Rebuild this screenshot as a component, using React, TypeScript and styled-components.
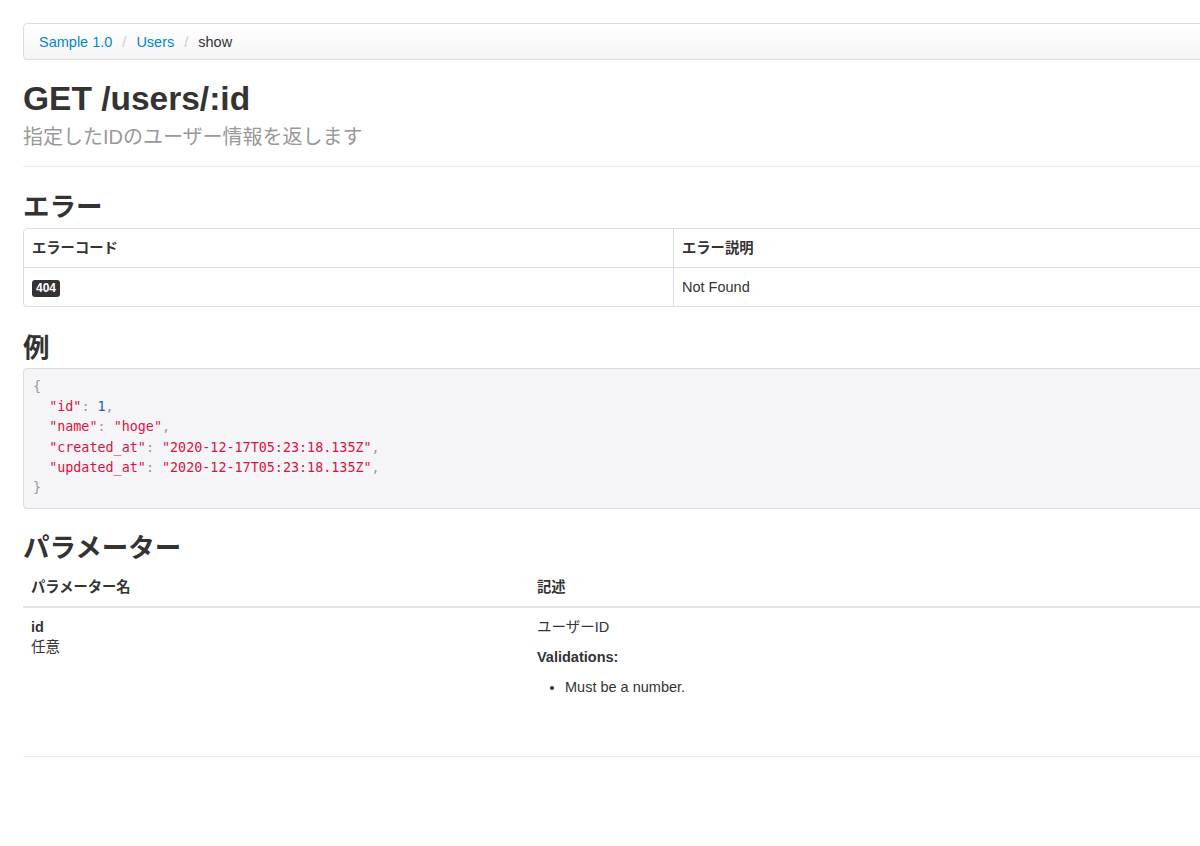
import styled, {createGlobalStyle} from "styled-components";

const GlobalStyle = createGlobalStyle`
    html, body {
        margin: 0;
        padding: 0;
        overflow-x: hidden;
        background: #ffffff;
    }
    body {
        font-family: "Liberation Sans", Arial, "Noto Sans CJK JP", sans-serif;
        font-size: 14.5px;
        line-height: 20px;
        color: #333333;
    }
`;

const Page = styled.div`
    width: 1300px;
    padding: 23px 0 80px 23px;
`;

const Breadcrumb = styled.ul`
    display: flex;
    align-items: center;
    list-style: none;
    margin: 0 0 19px 0;
    padding: 8px 15px;
    height: 19px;
    background: linear-gradient(to bottom, #ffffff, #f5f5f5);
    border: 1px solid #dddddd;
    border-radius: 4px;
    box-shadow: inset 0 1px 0 #ffffff;
    font-size: 14.5px;
`;

const Crumb = styled.li<{ $active?: boolean }>`
    color: ${p => (p.$active ? "#333333" : "#0088cc")};
`;

const Divider = styled.span`
    color: #cccccc;
    padding: 0 10px;
`;

const Title = styled.h1`
    margin: 0;
    font-size: 33.5px;
    line-height: 40px;
    font-weight: bold;
    color: #333333;
`;

const Subtitle = styled.div`
    font-size: 20px;
    line-height: 26px;
    color: #999999;
    margin-top: 5px;
`;

const Rule = styled.hr<{ $top: number }>`
    border: 0;
    border-top: 1px solid #eeeeee;
    margin: ${p => p.$top}px 0 0 0;
`;

const Section = styled.section<{ $gap: number }>`
    margin-top: ${p => p.$gap}px;
`;

const SectionTitle = styled.h2`
    margin: 0;
    font-size: 26.5px;
    line-height: 30px;
    font-weight: bold;
    color: #333333;
`;

const BorderedTable = styled.table`
    width: 100%;
    border-collapse: separate;
    border-spacing: 0;
    border: 1px solid #dddddd;
    border-radius: 4px;
    margin: 6px 0 0 0;
    th, td {
        text-align: left;
        padding: 9px 8px;
        line-height: 20px;
        vertical-align: top;
    }
    th {
        font-size: 14.3px;
        font-weight: bold;
    }
    th + th, td + td {
        border-left: 1px solid #dddddd;
    }
    td {
        border-top: 1px solid #dddddd;
    }
`;

const Badge = styled.span`
    display: inline-block;
    padding: 0 4px;
    background: #333333;
    color: #ffffff;
    font-size: 12px;
    font-weight: bold;
    line-height: 17px;
    border-radius: 3px;
    vertical-align: middle;
`;

const Code = styled.pre`
    margin: 5px 0 0 0;
    padding: 8px 9px 10px 9px;
    background: #f5f5f7;
    border: 1px solid #dcdcdc;
    border-radius: 4px;
    font-family: "DejaVu Sans Mono", "Liberation Mono", monospace;
    font-size: 13.4px;
    line-height: 20.2px;
    color: #999999;
`;

const Str = styled.span`
    color: #dd1144;
`;

const Num = styled.span`
    color: #225f95;
`;

const ParamTable = styled.table`
    width: 100%;
    border-collapse: collapse;
    margin-top: 5px;
    th, td {
        text-align: left;
        padding: 9px 8px;
        line-height: 20px;
        vertical-align: top;
    }
    th {
        font-size: 14.3px;
        font-weight: bold;
        border-bottom: 2px solid #e5e5e5;
    }
`;

const ParamName = styled.strong`
    display: block;
    font-weight: bold;
`;

const Validations = styled.p`
    margin: 10px 0 0 0;
    font-weight: bold;
`;

const ValidationList = styled.ul`
    margin: 10px 0 0 0;
    padding-left: 28px;
`;

export default function App(){
    return(
        <Page>
            <GlobalStyle/>
            <Breadcrumb>
                <Crumb>Sample 1.0</Crumb>
                <Divider>/</Divider>
                <Crumb>Users</Crumb>
                <Divider>/</Divider>
                <Crumb $active>show</Crumb>
            </Breadcrumb>

            <Title>GET /users/:id</Title>
            <Subtitle>指定したIDのユーザー情報を返します</Subtitle>
            <Rule $top={16}/>

            <Section $gap={25}>
                <SectionTitle>エラー</SectionTitle>
                <BorderedTable>
                    <thead>
                        <tr><th style={{width: "50%"}}>エラーコード</th><th>エラー説明</th></tr>
                    </thead>
                    <tbody>
                        <tr><td><Badge>404</Badge></td><td>Not Found</td></tr>
                    </tbody>
                </BorderedTable>
            </Section>

            <Section $gap={26}>
                <SectionTitle>例</SectionTitle>
                <Code>{"{\n  "}<Str>"id"</Str>{": "}<Num>1</Num>{",\n  "}<Str>"name"</Str>{": "}<Str>"hoge"</Str>{",\n  "}<Str>"created_at"</Str>{": "}<Str>"2020-12-17T05:23:18.135Z"</Str>{",\n  "}<Str>"updated_at"</Str>{": "}<Str>"2020-12-17T05:23:18.135Z"</Str>{",\n}"}</Code>
            </Section>

            <Section $gap={24}>
                <SectionTitle>パラメーター</SectionTitle>
                <ParamTable>
                    <thead>
                        <tr><th style={{width: 490}}>パラメーター名</th><th>記述</th></tr>
                    </thead>
                    <tbody>
                        <tr>
                            <td>
                                <ParamName>id</ParamName>
                                任意
                            </td>
                            <td>
                                ユーザーID
                                <Validations>Validations:</Validations>
                                <ValidationList>
                                    <li>Must be a number.</li>
                                </ValidationList>
                            </td>
                        </tr>
                    </tbody>
                </ParamTable>
            </Section>
            <Rule $top={50}/>
        </Page>
    );
}
